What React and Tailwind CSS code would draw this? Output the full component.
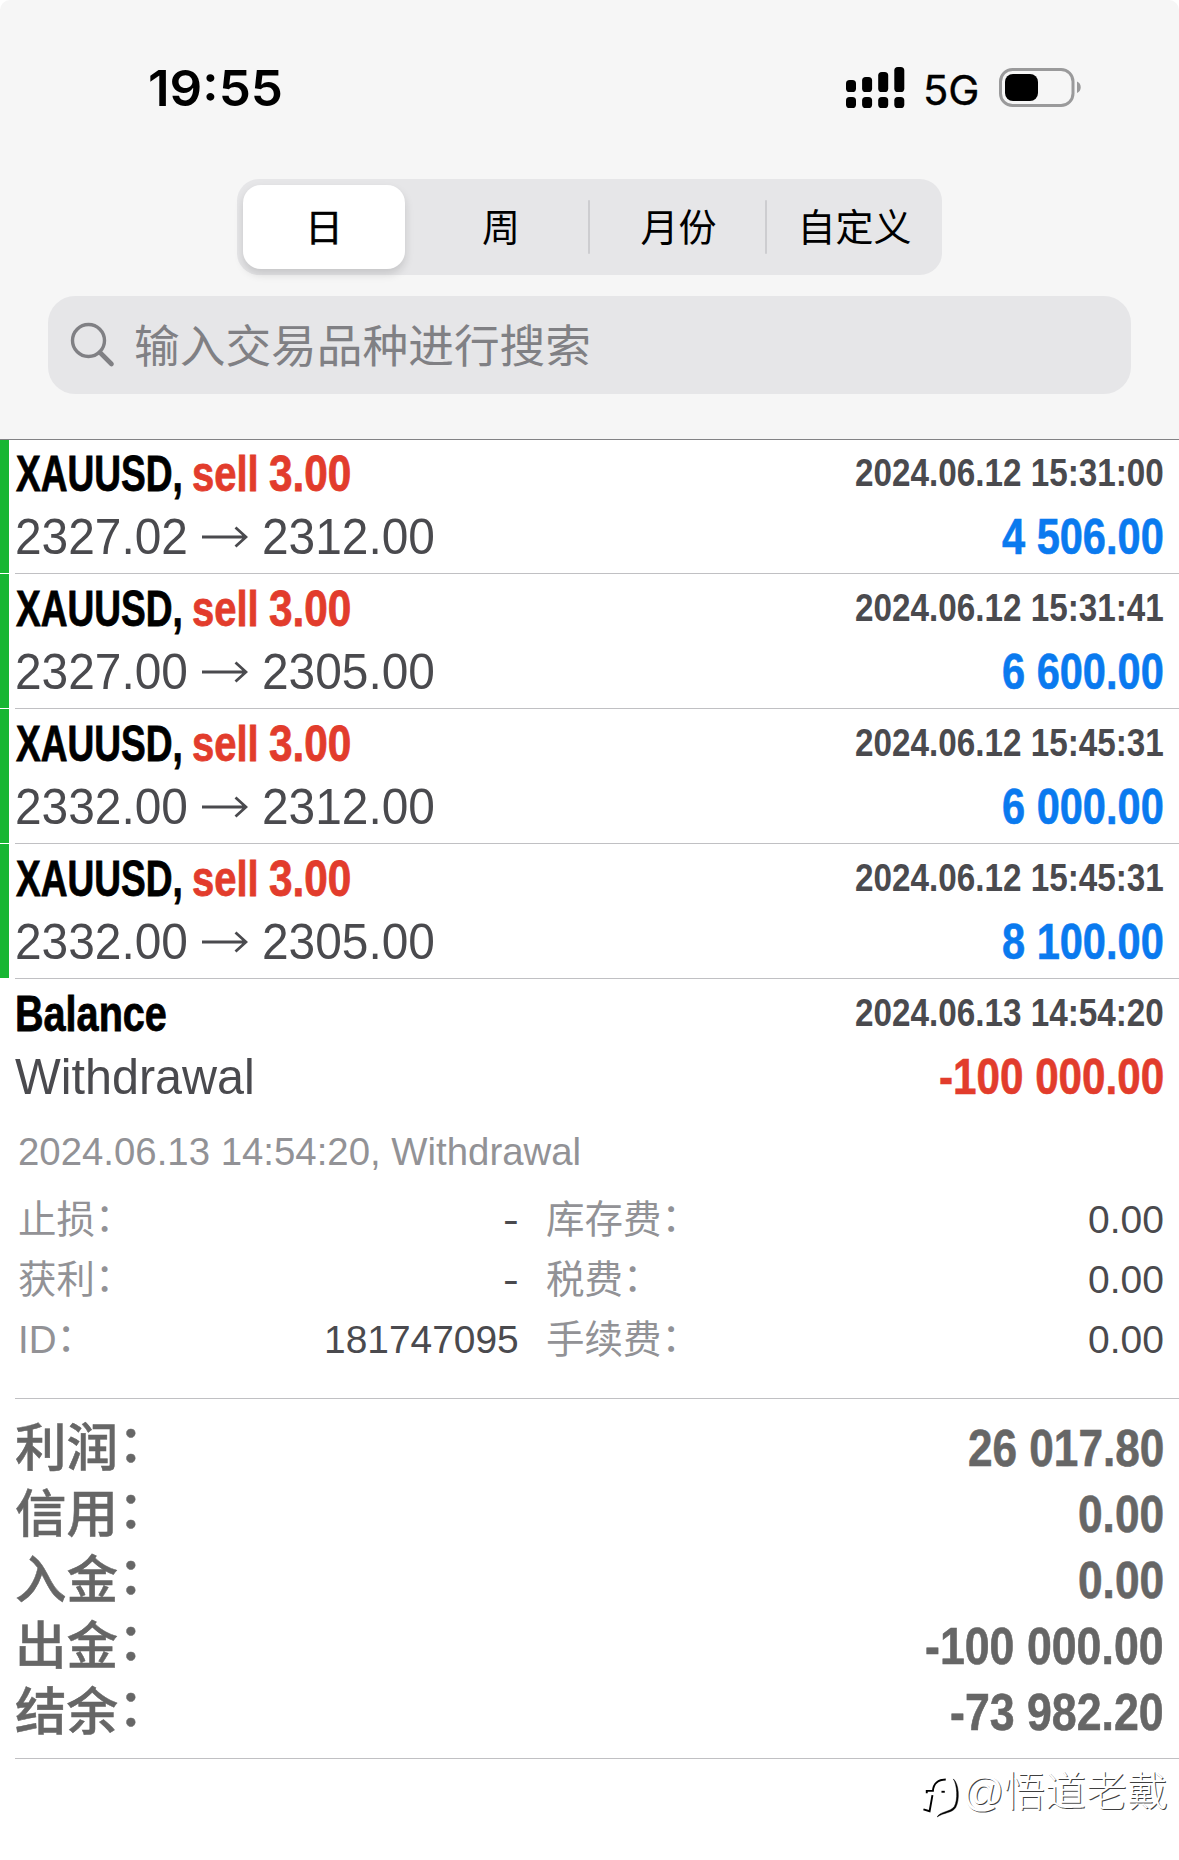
import { useLayoutEffect, useRef } from "react";

// Text condensed or widened horizontally so that it spans exactly `w` pixels.
function Fit({ w, className = "", children }) {
  const ref = useRef(null);
  useLayoutEffect(() => {
    const el = ref.current;
    el.style.transform = `scaleX(${w / el.offsetWidth})`;
  }, [w, children]);
  return (
    <span className={`inline-block shrink-0 whitespace-nowrap ${className}`} style={{ width: w }}>
      <span ref={ref} className="inline-block origin-left whitespace-pre">{children}</span>
    </span>
  );
}

const trades = [
  { open: "2327.02", close: "2312.00", time: "2024.06.12 15:31:00", profit: "4 506.00" },
  { open: "2327.00", close: "2305.00", time: "2024.06.12 15:31:41", profit: "6 600.00" },
  { open: "2332.00", close: "2312.00", time: "2024.06.12 15:45:31", profit: "6 000.00" },
  { open: "2332.00", close: "2305.00", time: "2024.06.12 15:45:31", profit: "8 100.00" },
];

const details = [
  ["止损", "-", 16, "库存费", "0.00"],
  ["获利", "-", 16, "税费", "0.00"],
  ["ID", "181747095", 195, "手续费", "0.00"],
];

const totals = [
  ["利润", "26 017.80", 196],
  ["信用", "0.00", 86],
  ["入金", "0.00", 86],
  ["出金", "-100 000.00", 239],
  ["结余", "-73 982.20", 214],
];

function StatusBar() {
  return (
    <div className="flex h-[179px] items-start pl-[148px] pr-[97px] pt-[58px]">
      <Fit w={135} className="font-['Inter'] text-[50px] font-semibold leading-[61px] text-black">19:55</Fit>
      <div className="ml-auto flex h-[60px] items-center">
        <svg width="59" height="42" viewBox="0 0 59 42" className="mr-[18px]">
          {[[13, 12], [10, 15], [5, 20], [0, 25]].map(([y, h], i) => (
            <g key={i}>
              <rect x={i * 16.1} y={y} width="10" height={h} rx="3.6" />
              <rect x={i * 16.1} y="30" width="10" height="11" rx="3.6" />
            </g>
          ))}
        </svg>
        <Fit w={57} className="mr-[19px] mt-[4px] font-['Inter'] text-[41px] leading-[60px] text-black [-webkit-text-stroke:0.4px]">5G</Fit>
        <svg width="83" height="40" viewBox="0 0 83 40">
          <rect x="1.5" y="1.5" width="72.5" height="36" rx="12" fill="none" stroke="#9a9a9b" strokeWidth="3" />
          <rect x="6" y="6" width="33" height="27" rx="8" />
          <path d="M78 13.500c5 2 5 9.500 0 11.500z" fill="#9a9a9b" />
        </svg>
      </div>
    </div>
  );
}

function Periods() {
  return (
    <div className="mx-auto flex h-[96px] w-[705px] items-center rounded-[22px] bg-[#e6e6e8] text-[38px] text-black">
      <div className="ml-[6px] flex h-[84px] w-[162px] items-center justify-center rounded-[18px] bg-white pt-[2px] shadow-[0_5px_10px_rgba(0,0,0,0.14)] [-webkit-text-stroke:0.5px]">日</div>
      <div className="ml-[9px] flex flex-1 items-center justify-center pt-[2px]">周</div>
      <div className="h-[54px] w-[2px] rounded bg-[#cdcdd0]" />
      <div className="flex w-[175px] items-center justify-center pl-[2px] pt-[2px]">月份</div>
      <div className="h-[54px] w-[2px] rounded bg-[#cdcdd0]" />
      <div className="flex w-[175px] items-center justify-center pt-[2px]">自定义</div>
    </div>
  );
}

function Search() {
  return (
    <div className="mx-[48px] mt-[21px] flex h-[98px] items-center rounded-[27px] bg-[#e6e6e8] pl-[22px] text-[#808084]">
      <svg width="46" height="46" viewBox="0 0 46 46" fill="none" stroke="currentColor">
        <circle cx="18.5" cy="18.5" r="16" strokeWidth="3.4" />
        <path d="M30 30.5L41.500 42" strokeWidth="4.600" strokeLinecap="round" />
      </svg>
      <Fit w={457} className="ml-[18px] pt-[5px] text-[45px] leading-[93px]">输入交易品种进行搜索</Fit>
    </div>
  );
}

function Colon({ className = "" }) {
  return <span className={`relative ${className}`}>：</span>;
}

function Row({ title, sub, time, amount, amountWidth, amountColor }) {
  return (
    <div className="flex h-[134px] flex-1 flex-col pl-[6px] pr-[15px] pt-[3px]">
      <div className="flex h-[63px] items-center justify-between text-[49.5px] leading-[63px]">
        {title}
        <Fit w={309} className="-mt-[3px] text-[39.5px] font-bold text-[#4a4a4e]">{time}</Fit>
      </div>
      <div className="flex h-[63px] items-center justify-between text-[49.5px] leading-[63px] text-[#4a4a4e]">
        {sub}
        <Fit w={amountWidth} className={`font-bold [-webkit-text-stroke:0.6px] ${amountColor}`}>{amount}</Fit>
      </div>
    </div>
  );
}

function Trade({ t }) {
  return (
    <div className="flex h-[135px]">
      <div className="h-[134px] w-[9px] bg-[#17b632]" />
      <div className="ml-[6px] flex flex-1 border-b border-[#c0c0c3]">
        <div className="-ml-[6px] flex flex-1">
          <Row
            title={
              <div className="flex pl-px font-bold [-webkit-text-stroke:0.8px]">
                <Fit w={167} className="text-black">XAUUSD,</Fit>
                <Fit w={67} className="ml-[9px] text-[#e23c2c]">sell</Fit>
                <Fit w={82} className="ml-[10px] text-[#e23c2c]">3.00</Fit>
              </div>
            }
            sub={
              <div className="flex items-center">
                <Fit w={173}>{t.open}</Fit>
                <svg width="46" height="22" viewBox="0 0 46 22" fill="none" stroke="currentColor" strokeWidth="2.800" className="ml-[14px]">
                  <path d="M0 11H44M33.500 1.500L44 11L33.500 20.500" />
                </svg>
                <Fit w={173} className="ml-[14px]">{t.close}</Fit>
              </div>
            }
            time={t.time}
            amount={t.profit}
            amountWidth={162}
            amountColor="text-[#0a7aef]"
          />
        </div>
      </div>
    </div>
  );
}

function Watermark() {
  return (
    <div className="flex h-[66px] items-center justify-end pr-[11px] pt-[2px]">
      <svg width="38" height="42" viewBox="0 0 40 42" fill="none" stroke="#000" className="mr-[2px] mt-[8px]">
        <path d="M5 17V14.500H11.500C12 7 17 2.500 25 2.500" strokeWidth="2" />
        <path d="M11 19L8 36L1.500 34" strokeWidth="2" />
        <path d="M20.500 15.500H24" strokeWidth="2" />
        <path d="M33 2C37 8 38 24 34 31C30 37 19 36 16 42C23 37 32 38 35.500 32C40 24 39 7 33 2Z" fill="#000" strokeWidth="0.500" />
      </svg>
      <span className="text-[41px] font-light text-white [text-shadow:1px_1px_0_rgba(0,0,0,0.75)]">@悟道老戴</span>
    </div>
  );
}

export default function App() {
  return (
    <div className="h-[1860px] w-[1179px] overflow-hidden bg-white font-['Liberation_Sans','Noto_Sans_CJK_SC',sans-serif]">
      <header className="relative h-[440px] rounded-t-[10px] bg-[#f6f6f6]">
        <StatusBar />
        <Periods />
        <Search />
        <div className="mt-[45px] h-px bg-[#828285]" />
      </header>
      <main className="-mt-px">
        {trades.map((t, i) => <Trade key={i} t={t} />)}
        <div className="-mt-px flex pl-[9px] pt-px">
          <Row
            title={<Fit w={152} className="font-bold text-black [-webkit-text-stroke:0.8px]">Balance</Fit>}
            sub={<Fit w={240}>Withdrawal</Fit>}
            time="2024.06.13 14:54:20"
            amount="-100 000.00"
            amountWidth={225}
            amountColor="text-[#e23c2c]"
          />
        </div>
        <section className="ml-[15px] h-[286px] border-b border-[#c0c0c3] pl-[3px] pt-[2px] text-[38.500px] text-[#929296]">
          <div className="flex h-[75px] items-center">
            <Fit w={563} className="-mt-[2px] leading-[60px]">2024.06.13 14:54:20, Withdrawal</Fit>
          </div>
          {details.map(([a, b, w, c, d]) => (
            <div key={a} className="flex h-[60px] items-center leading-[60px]">
              <div className="w-[180px]">{a}<Colon className="-top-[2px]" /></div>
              <div className="flex w-[321px] justify-end text-[#4a4a4e]"><Fit w={w}>{b}</Fit></div>
              <div className="ml-[27px]">{c}<Colon className="-top-[2px]" /></div>
              <Fit w={76} className="ml-auto mr-[15px] text-[#4a4a4e]">{d}</Fit>
            </div>
          ))}
        </section>
        <section className="ml-[15px] h-[360px] border-b border-[#c0c0c3] pr-[15px] pt-[16px] font-bold text-[#666]">
          {totals.map(([a, b, w]) => (
            <div key={a} className="flex h-[66px] items-center justify-between leading-[66px]">
              <div className="text-[51.500px] font-medium [-webkit-text-stroke:0.5px]">{a}<Colon className="-top-[4px]" /></div>
              <Fit w={w} className="text-[52px] [-webkit-text-stroke:0.6px]">{b}</Fit>
            </div>
          ))}
        </section>
      </main>
      <Watermark />
    </div>
  );
}
